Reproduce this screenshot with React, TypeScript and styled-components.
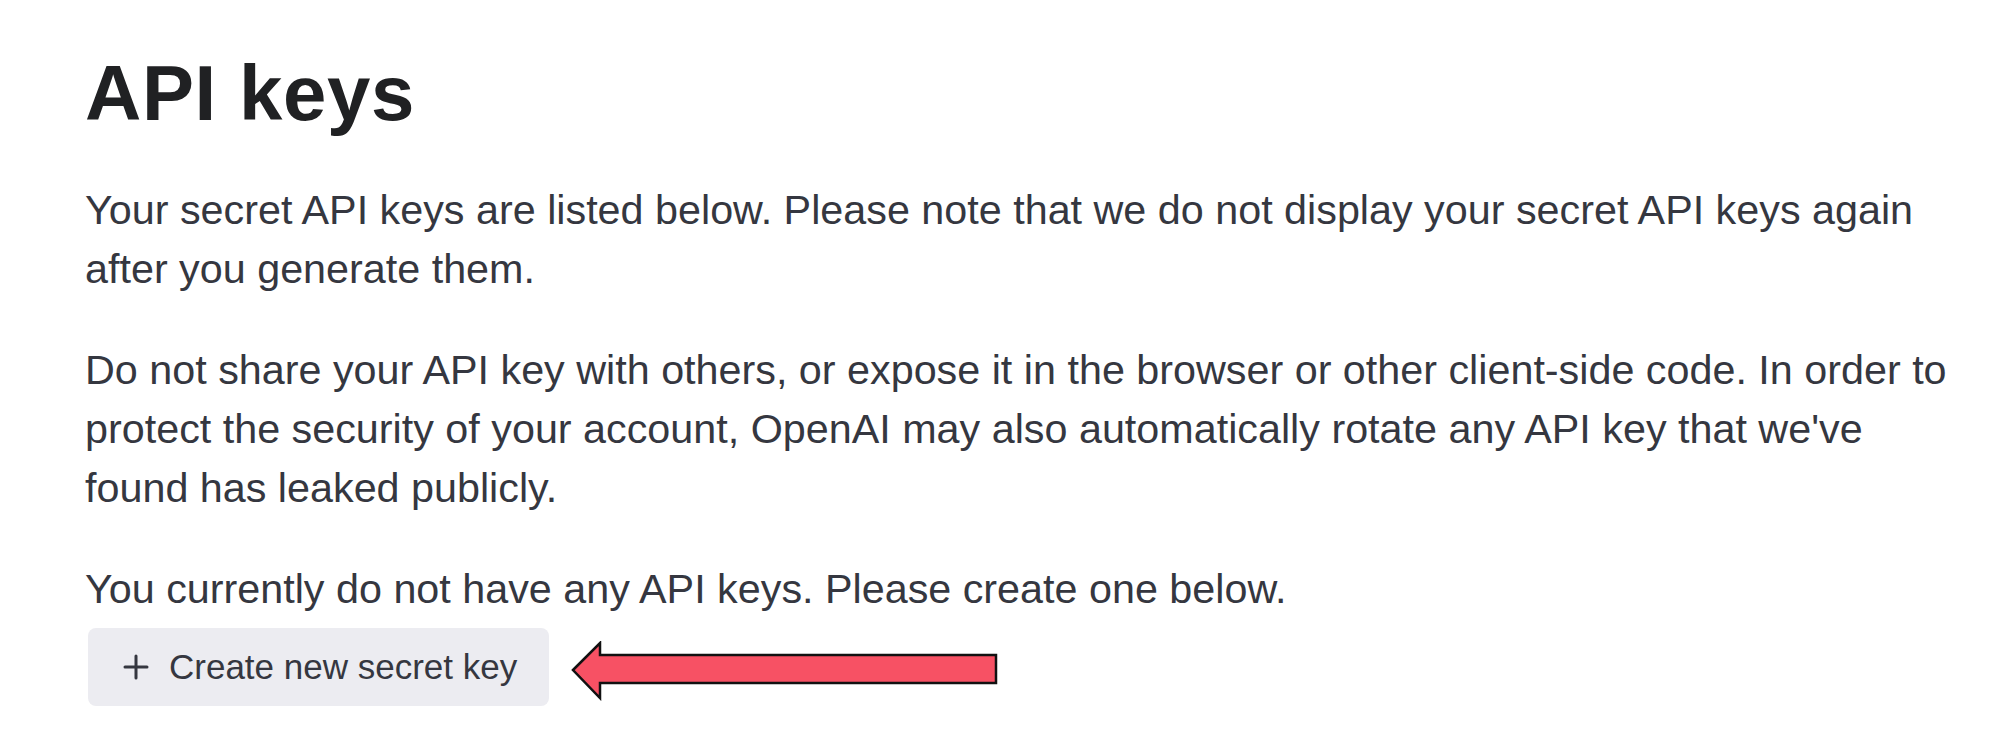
import styled, { createGlobalStyle } from 'styled-components';

const GlobalStyle = createGlobalStyle`
  html, body {
    margin: 0;
    padding: 0;
    background: #ffffff;
  }
  body {
    font-family: "Liberation Sans", Arial, sans-serif;
    -webkit-font-smoothing: antialiased;
  }
`;

const Page = styled.main`
  box-sizing: border-box;
  width: 2000px;
  min-height: 739px;
  padding: 48px 40px 0 85px;
`;

const Title = styled.h1`
  margin: 0 0 43px;
  font-size: 78px;
  line-height: 90px;
  font-weight: 700;
  color: #202123;
  letter-spacing: 0.6px;
`;

const Paragraph = styled.p<{ $gap?: number }>`
  margin: 0 0 ${(p) => (p.$gap ?? 42)}px;
  font-size: 41.3px;
  line-height: 59px;
  color: #353740;
`;

const ActionRow = styled.div`
  display: flex;
  align-items: flex-start;
  gap: 22px;
`;

const CreateButton = styled.button`
  display: flex;
  align-items: center;
  gap: 20px;
  box-sizing: border-box;
  height: 78px;
  margin-left: 3px;
  padding: 0 32px 0 35px;
  border: none;
  border-radius: 8px;
  background: #ececf1;
  color: #353740;
  font-family: "Liberation Sans", Arial, sans-serif;
  font-size: 35px;
  cursor: pointer;
`;

const Arrow = styled.svg`
  display: block;
  margin-top: 13px;
`;

const PlusIcon = () => (
  <svg width="26" height="26" viewBox="0 0 26 26" aria-hidden="true">
    <path d="M13 2v22M2 13h22" stroke="#353740" strokeWidth="3" strokeLinecap="round" fill="none" />
  </svg>
);

export default function App() {
  return (
    <>
      <GlobalStyle />
      <Page>
        <Title>API keys</Title>
        <Paragraph>
          Your secret API keys are listed below. Please note that we do not display your secret API keys again
          after you generate them.
        </Paragraph>
        <Paragraph>
          Do not share your API key with others, or expose it in the browser or other client-side code. In order to
          protect the security of your account, OpenAI may also automatically rotate any API key that we've found has
          leaked publicly.
        </Paragraph>
        <Paragraph $gap={9}>You currently do not have any API keys. Please create one below.</Paragraph>
        <ActionRow>
          <CreateButton type="button">
            <PlusIcon />
            Create new secret key
          </CreateButton>
          <Arrow width="428" height="60" viewBox="0 0 428 60" aria-hidden="true">
            <path
              d="M2 29 L29 2 L29 14 L425 14 L425 42 L29 42 L29 57 Z"
              fill="#f75164"
              stroke="#111"
              strokeWidth="2.5"
              strokeLinejoin="miter"
            />
          </Arrow>
        </ActionRow>
      </Page>
    </>
  );
}
